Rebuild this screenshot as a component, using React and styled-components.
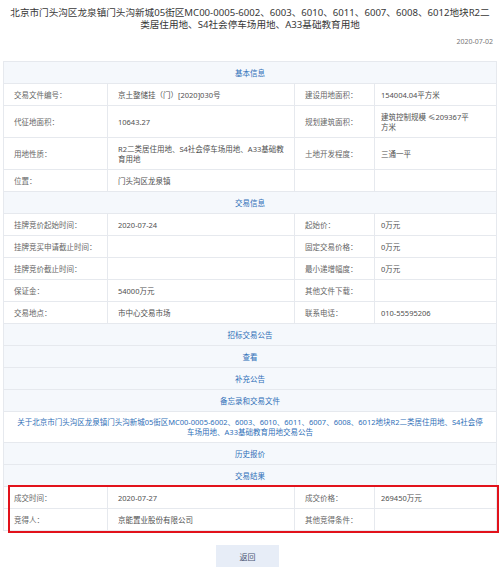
import React from 'react';
import styled, { createGlobalStyle } from 'styled-components';

const GlobalStyle = createGlobalStyle`
  html, body {
    margin: 0;
    padding: 0;
    background: #ffffff;
  }
  body {
    font-family: "Noto Sans", "Noto Sans CJK SC", sans-serif;
    color: #444;
  }
`;

const Page = styled.div`
  width: 500px;
  padding: 7px 3px 0;
  box-sizing: border-box;
`;

const Title = styled.h1`
  margin: 0;
  font-size: 9.6px;
  line-height: 12px;
  font-weight: 400;
  text-align: center;
  color: #383838;
`;

const PubDate = styled.div`
  margin-top: 6px;
  padding-right: 4px;
  text-align: right;
  font-size: 7px;
  line-height: 10px;
  color: #777;
`;

const Table = styled.div`
  margin-top: 14px;
  border-top: 1px solid #e6e9ee;
  border-left: 1px solid #e6e9ee;
  font-size: 7.5px;
  line-height: 10px;
`;

const Row = styled.div`
  display: grid;
  grid-template-columns: 104px 187px 80px 1fr;
`;

const Cell = styled.div`
  display: flex;
  align-items: center;
  min-height: 10px;
  padding: ${p => (p.$tight ? '5.5px 20px 5.5px 6px' : '5.5px 3px 5.5px 10px')};
  border-right: 1px solid #e6e9ee;
  border-bottom: 1px solid #e6e9ee;
  color: ${p => (p.$label ? '#666' : '#505050')};
  background: #fff;
`;

const Band = styled.div`
  padding: ${p => (p.$wrap ? '5px 10px' : '5.5px 10px')};
  min-height: 10px;
  text-align: center;
  color: #2f6fb8;
  background: ${p => (p.$plain ? '#fff' : '#f5f8fc')};
  border-right: 1px solid #e6e9ee;
  border-bottom: 1px solid #e6e9ee;
`;

const Result = styled.div`
  position: relative;
`;

const RedFrame = styled.div`
  position: absolute;
  top: -2px;
  left: 4px;
  right: -2px;
  bottom: -2px;
  border: 2px solid #e2121b;
  pointer-events: none;
`;

const Footer = styled.div`
  display: flex;
  justify-content: center;
  padding: 14px 0 0;
  margin-left: -3px;
`;

const BackButton = styled.button`
  width: 63px;
  height: 22px;
  border: 0;
  background: #e7edf7;
  color: #4a5573;
  font-family: inherit;
  font-size: 8px;
  margin-left: -2px;
`;

const Pair = ({ l1, v1, l2, v2 }) => (
  <Row>
    <Cell $label>{l1}</Cell>
    <Cell>{v1}</Cell>
    <Cell $label>{l2}</Cell>
    <Cell $tight>{v2}</Cell>
  </Row>
);

const basic = [
  ['交易文件编号：', '京土整储挂（门）[2020]030号', '建设用地面积：', '154004.04平方米'],
  ['代征地面积：', '10643.27', '规划建筑面积：', '建筑控制规模 ≤209367平方米'],
  [
    '用地性质：',
    <span key="u">R2二类居住用地、S4社会停车场用地、A33基础教<br />育用地</span>,
    '土地开发程度：',
    '三通一平',
  ],
  ['位置：', '门头沟区龙泉镇', '', ''],
];

const trade = [
  ['挂牌竞价起始时间：', '2020-07-24', '起始价：', '0万元'],
  ['挂牌竞买申请截止时间：', '', '固定交易价格：', '0万元'],
  ['挂牌竞价截止时间：', '', '最小递增幅度：', '0万元'],
  ['保证金：', '54000万元', '其他文件下载：', ''],
  ['交易地点：', '市中心交易市场', '联系电话：', '010-55595206'],
];

const result = [
  ['成交时间：', '2020-07-27', '成交价格：', '269450万元'],
  ['竞得人：', '京能置业股份有限公司', '其他竞得条件：', ''],
];

const renderRows = rows =>
  rows.map((r, i) => <Pair key={i} l1={r[0]} v1={r[1]} l2={r[2]} v2={r[3]} />);

const App = () => (
  <Page>
    <GlobalStyle />
    <Title>
      北京市门头沟区龙泉镇门头沟新城05街区MC00-0005-6002、6003、6010、6011、6007、6008、6012地块R2二
      <br />
      类居住用地、S4社会停车场用地、A33基础教育用地
    </Title>
    <PubDate>2020-07-02</PubDate>
    <Table>
      <Band>基本信息</Band>
      {renderRows(basic)}
      <Band>交易信息</Band>
      {renderRows(trade)}
      <Band>招标交易公告</Band>
      <Band>查看</Band>
      <Band>补充公告</Band>
      <Band>备忘录和交易文件</Band>
      <Band $plain $wrap>
        关于北京市门头沟区龙泉镇门头沟新城05街区MC00-0005-6002、6003、6010、6011、6007、6008、6012地块R2二类居住用地、S4社会停
        <br />
        车场用地、A33基础教育用地交易公告
      </Band>
      <Band>历史报价</Band>
      <Band>交易结果</Band>
      <Result>
        {renderRows(result)}
        <RedFrame />
      </Result>
    </Table>
    <Footer>
      <BackButton>返回</BackButton>
    </Footer>
  </Page>
);

export default App;
